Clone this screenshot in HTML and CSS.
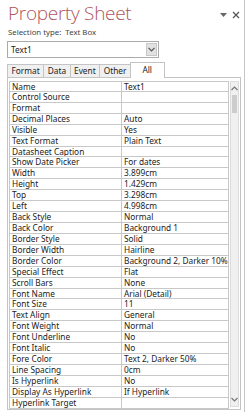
FILE: index.html
```html
<!DOCTYPE html>
<html>
<head>
    <title>Property Sheet</title>
    <link rel="stylesheet" href="styles.css">
</head>
<body>
    <div class="sheet">
        <div class="header">
            <div class="title">Property Sheet</div>
            <div class="win-buttons">
                <svg width="7" height="4" viewBox="0 0 7 4"><path d="M0 0 L7 0 L3.5 4 Z" fill="#666"/></svg>
                <svg width="8" height="8" viewBox="0 0 8 8"><path d="M1 1 L7 7 M7 1 L1 7" stroke="#555" stroke-width="1.2"/></svg>
            </div>
        </div>
        <div class="selection">Selection type:&nbsp; Text Box</div>

        <div class="combo">
            <span class="combo-text">Text1</span>
            <span class="combo-btn">
                <svg width="7" height="5" viewBox="0 0 7 5"><path d="M0.5 0.8 L3.5 3.8 L6.5 0.8" stroke="#555" stroke-width="1.2" fill="none"/></svg>
            </span>
        </div>

        <div class="tabs">
            <div class="tab">Format</div>
            <div class="tab">Data</div>
            <div class="tab">Event</div>
            <div class="tab">Other</div>
            <div class="tab active">All</div>
        </div>

        <div class="panel">
            <div class="grid" id="grid"></div>
            <div class="scrollbar">
                <div class="arrow">
                    <svg width="7" height="5" viewBox="0 0 7 5"><path d="M0.5 4 L3.5 1 L6.5 4" stroke="#777" stroke-width="1.2" fill="none"/></svg>
                </div>
                <div class="track"><div class="thumb"></div></div>
                <div class="arrow">
                    <svg width="7" height="5" viewBox="0 0 7 5"><path d="M0.5 1 L3.5 4 L6.5 1" stroke="#777" stroke-width="1.2" fill="none"/></svg>
                </div>
            </div>
        </div>
    </div>

    <script>
        const props = [
            ['Name', 'Text1'],
            ['Control Source', ''],
            ['Format', ''],
            ['Decimal Places', 'Auto'],
            ['Visible', 'Yes'],
            ['Text Format', 'Plain Text'],
            ['Datasheet Caption', ''],
            ['Show Date Picker', 'For dates'],
            ['Width', '3.899cm'],
            ['Height', '1.429cm'],
            ['Top', '3.298cm'],
            ['Left', '4.998cm'],
            ['Back Style', 'Normal'],
            ['Back Color', 'Background 1'],
            ['Border Style', 'Solid'],
            ['Border Width', 'Hairline'],
            ['Border Color', 'Background 2, Darker 10%'],
            ['Special Effect', 'Flat'],
            ['Scroll Bars', 'None'],
            ['Font Name', 'Arial (Detail)'],
            ['Font Size', '11'],
            ['Text Align', 'General'],
            ['Font Weight', 'Normal'],
            ['Font Underline', 'No'],
            ['Font Italic', 'No'],
            ['Fore Color', 'Text 2, Darker 50%'],
            ['Line Spacing', '0cm'],
            ['Is Hyperlink', 'No'],
            ['Display As Hyperlink', 'If Hyperlink'],
            ['Hyperlink Target', '']
        ];

        const grid = document.getElementById('grid');
        props.forEach(([name, value]) => {
            const row = document.createElement('div');
            row.className = 'row';
            row.innerHTML = `<div class="cell name">${name}</div><div class="cell value">${value}</div>`;
            grid.appendChild(row);
        });
    </script>
</body>
</html>
```

FILE: styles.css
```css
body {
    margin: 0;
    background: #ffffff;
    font-family: "Noto Sans", "Open Sans", sans-serif;
    color: #222;
}
.sheet {
    width: 245px;
    height: 412px;
    box-sizing: border-box;
    border-right: 1px solid #c6c6c6;
    padding: 0 3px 0 7px;
    display: flex;
    flex-direction: column;
    overflow: hidden;
}
.header {
    display: flex;
    justify-content: space-between;
    align-items: flex-start;
    height: 27px;
}
.title {
    font-family: "Open Sans", sans-serif;
    font-weight: 300;
    font-size: 19px;
    line-height: 22px;
    color: #b0545b;
    margin-top: 2px;
    margin-left: 1px;
    letter-spacing: -0.3px;
}
.win-buttons {
    display: flex;
    align-items: center;
    gap: 5px;
    margin-top: 11px;
    margin-right: 1px;
}
.selection {
    font-size: 7.8px;
    color: #444;
    height: 14px;
    line-height: 10px;
    margin-left: 1px;
}
.combo {
    width: 152px;
    height: 17px;
    box-sizing: border-box;
    border: 1px solid #ababab;
    display: flex;
    align-items: center;
    justify-content: space-between;
}
.combo-text {
    font-size: 8.3px;
    padding-left: 3px;
}
.combo-btn {
    width: 11px;
    height: 13px;
    margin-right: 1px;
    background: #e1e1e1;
    border: 1px solid #c8c8c8;
    box-sizing: border-box;
    display: flex;
    align-items: center;
    justify-content: center;
}
.tabs {
    display: flex;
    align-items: flex-end;
    margin-top: 3px;
    height: 16px;
    position: relative;
    z-index: 1;
}
.tab {
    font-size: 8.3px;
    height: 13px;
    line-height: 12px;
    box-sizing: border-box;
    padding: 0 3.5px;
    border: 1px solid #c4c4c4;
    border-bottom: none;
    border-right: none;
    background: #f0f0f0;
    color: #222;
}
.tab.active {
    height: 16px;
    line-height: 14px;
    background: #ffffff;
    padding: 0 11.5px;
    border-right: 1px solid #c4c4c4;
    margin-bottom: -1px;
}
.panel {
    flex: 1;
    border: 1px solid #c4c4c4;
    margin-bottom: 2px;
    padding: 3px 2px 0 1px;
    display: flex;
    gap: 1px;
    overflow: hidden;
}
.grid {
    width: 218px;
    border-left: 1px solid #c8c8c8;
    border-right: 1px solid #c8c8c8;
    align-self: flex-start;
}
.row {
    display: flex;
    height: 10.93px;
    border-bottom: 1px solid #c8c8c8;
    box-sizing: border-box;
}
.row:first-child {
    border-top: 1px solid #c8c8c8;
}
.cell {
    font-size: 8.3px;
    line-height: 10px;
    white-space: nowrap;
    overflow: hidden;
}
.name {
    width: 109px;
    padding-left: 2px;
    border-right: 1px solid #c8c8c8;
}
.value {
    flex: 1;
    padding-left: 2px;
}
.scrollbar {
    width: 13px;
    display: flex;
    flex-direction: column;
    background: #f0f0f0;
    border: 1px solid #dcdcdc;
    box-sizing: border-box;
    margin-bottom: 2px;
}
.arrow {
    height: 13px;
    display: flex;
    align-items: center;
    justify-content: center;
}
.track {
    flex: 1;
}
.thumb {
    height: 18px;
    margin: 0 1px;
    background: #cdcdcd;
}
```
